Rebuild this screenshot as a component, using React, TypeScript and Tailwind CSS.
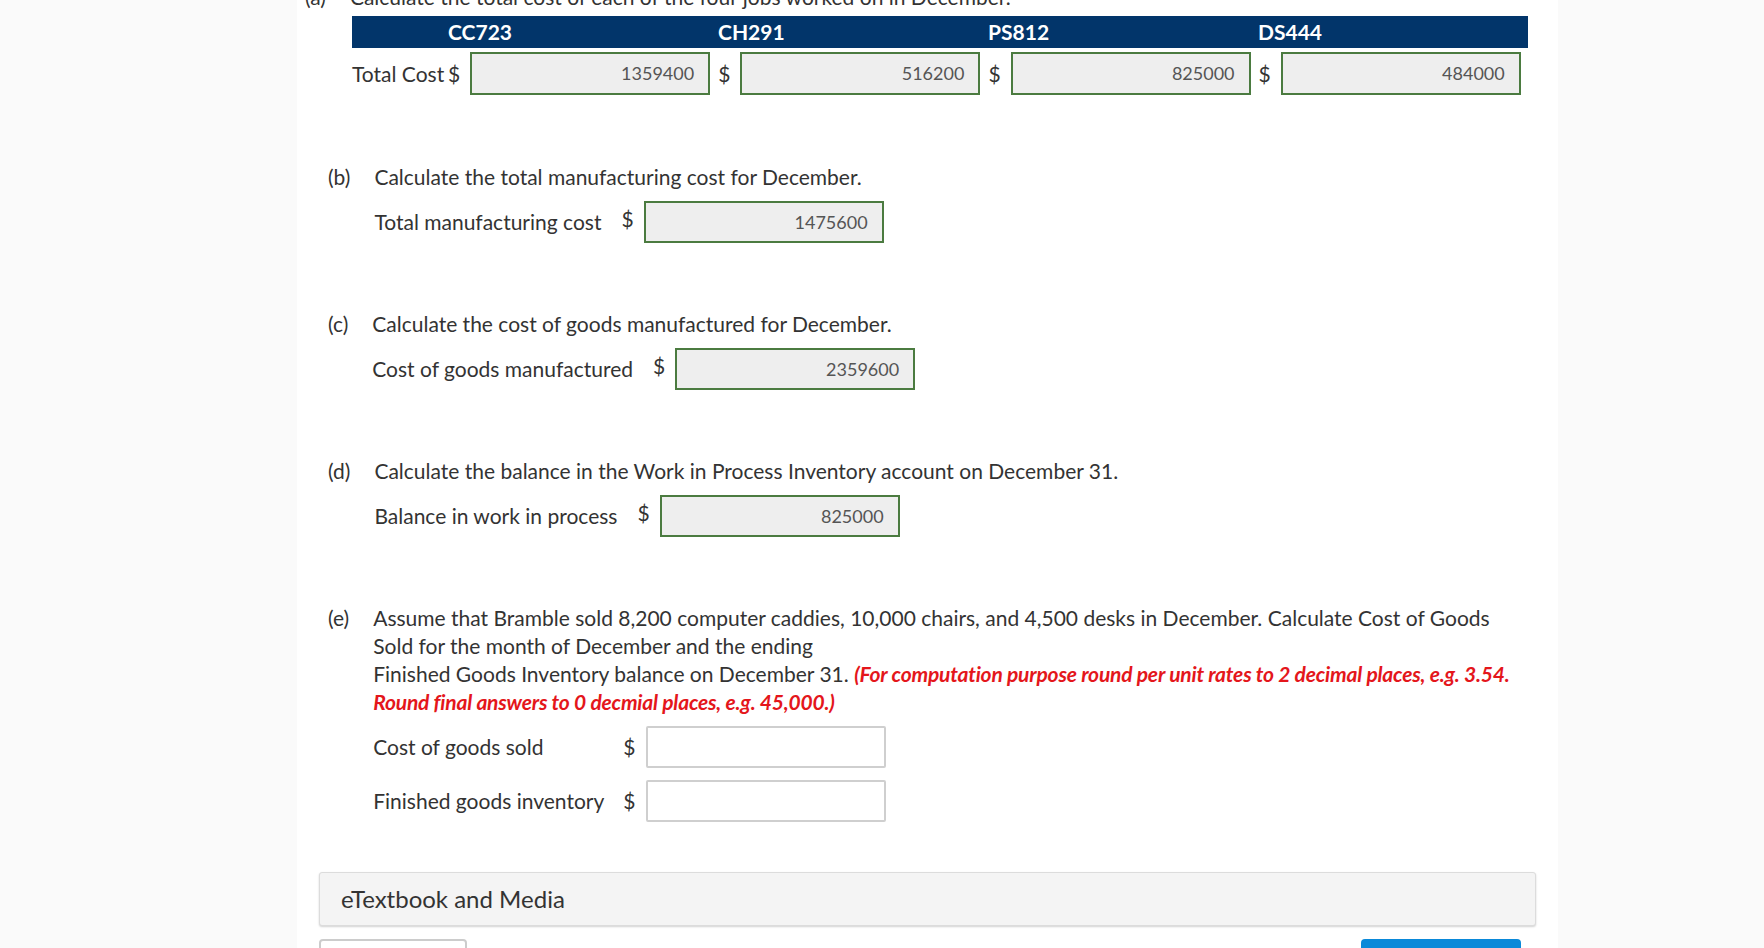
import React from "react";

const jobs = [
  { code: "CC723", cost: "1359400" },
  { code: "CH291", cost: "516200" },
  { code: "PS812", cost: "825000" },
  { code: "DS444", cost: "484000" },
];

function AnswerBox({ value, className = "" }: { value?: string; className?: string }) {
  if (value === undefined) {
    return <div className={`h-[42px] w-[240px] rounded-[2px] border-2 border-[#cfcfcf] bg-white ${className}`} />;
  }
  return (
    <div
      className={`flex h-[42px] w-[240px] items-center justify-end border-2 border-[#4b7b40] bg-[#eeeeee] pr-[14px] text-[18px] text-[#555555] ${className}`}
    >
      {value}
    </div>
  );
}

function Part({
  tag,
  question,
  label,
  value,
}: {
  tag: string;
  question: string;
  label: string;
  value: string;
}) {
  return (
    <div className="flex pl-[31px]">
      <span className="mr-[24px] leading-[28px]">{tag}</span>
      <div>
        <p className="leading-[28px]">{question}</p>
        <div className="mt-[10px] flex items-center">
          <span>{label}</span>
          <span className="mb-[6px] ml-[20px]">$</span>
          <AnswerBox value={value} className="ml-[10px]" />
        </div>
      </div>
    </div>
  );
}

export default function App() {
  return (
    <div className="min-h-screen bg-[#fafafa] font-['Lato',sans-serif] text-[21px] text-[#333333]">
      <div className="ml-[297px] h-[948px] w-[1261px] overflow-hidden bg-white">
        {/* part (a), cut off by the top of the viewport */}
        <div className="-mt-[17px] flex pl-[8px] leading-[28px]">
          <span className="mr-[24px]">(a)</span>
          <span>Calculate the total cost of each of the four jobs worked on in December.</span>
        </div>

        <div className="mt-[5px] pl-[55px]">
          <div className="flex h-[32px] w-[1176px] items-center bg-[#02356a] text-[21px] font-bold text-white">
            <div className="w-[96px]" />
            {jobs.map((j) => (
              <div key={j.code} className="w-[270px]">
                {j.code}
              </div>
            ))}
          </div>
          <div className="mt-[4px] flex h-[43px] items-center">
            <span className="w-[96px] whitespace-nowrap">Total Cost</span>
            {jobs.map((j, i) => (
              <React.Fragment key={j.code}>
                <span className={i === 0 ? "" : "ml-[8px]"}>$</span>
                <div className="ml-[10px] flex h-[43px] w-[240px] items-center justify-end border-2 border-[#4b7b40] bg-[#eeeeee] pr-[14px] text-[18px] text-[#555555]">
                  {j.cost}
                </div>
              </React.Fragment>
            ))}
          </div>
        </div>

        <div className="mt-[68px]">
          <Part
            tag="(b)"
            question="Calculate the total manufacturing cost for December."
            label="Total manufacturing cost"
            value="1475600"
          />
        </div>
        <div className="mt-[67px]">
          <Part
            tag="(c)"
            question="Calculate the cost of goods manufactured for December."
            label="Cost of goods manufactured"
            value="2359600"
          />
        </div>
        <div className="mt-[67px]">
          <Part
            tag="(d)"
            question="Calculate the balance in the Work in Process Inventory account on December 31."
            label="Balance in work in process"
            value="825000"
          />
        </div>

        <div className="mt-[67px] flex pl-[31px]">
          <span className="mr-[24px] leading-[28px]">(e)</span>
          <div>
            <p className="whitespace-nowrap leading-[28px]">
              Assume that Bramble sold 8,200 computer caddies, 10,000 chairs, and 4,500 desks in December. Calculate Cost of Goods
              <br />
              Sold for the month of December and the ending
              <br />
              Finished Goods Inventory balance on December 31.{" "}
              <span className="font-bold italic tracking-[-0.2px] text-[#e4161b]">
                (For computation purpose round per unit rates to 2 decimal places, e.g. 3.54.
                <br />
                Round final answers to 0 decmial places, e.g. 45,000.)
              </span>
            </p>
            <div className="mt-[10px] flex items-center">
              <span className="w-[250px]">Cost of goods sold</span>
              <span>$</span>
              <AnswerBox className="ml-[11px]" />
            </div>
            <div className="mt-[12px] flex items-center">
              <span className="w-[250px]">Finished goods inventory</span>
              <span>$</span>
              <AnswerBox className="ml-[11px]" />
            </div>
          </div>
        </div>

        <div className="mx-[22px] mt-[50px] flex h-[54px] items-center rounded-[3px] border border-[#dcdcdc] bg-[#f4f4f4] pl-[21px] text-[24px] shadow-[0_1px_2px_rgba(0,0,0,0.18)]">
          eTextbook and Media
        </div>

        <div className="mx-[22px] mt-[13px] flex justify-between pr-[15px]">
          <div className="h-[40px] w-[148px] rounded-[4px] border-2 border-[#cccccc] bg-white" />
          <div className="h-[40px] w-[160px] rounded-[4px] bg-[#0a89d9]" />
        </div>
      </div>
    </div>
  );
}
